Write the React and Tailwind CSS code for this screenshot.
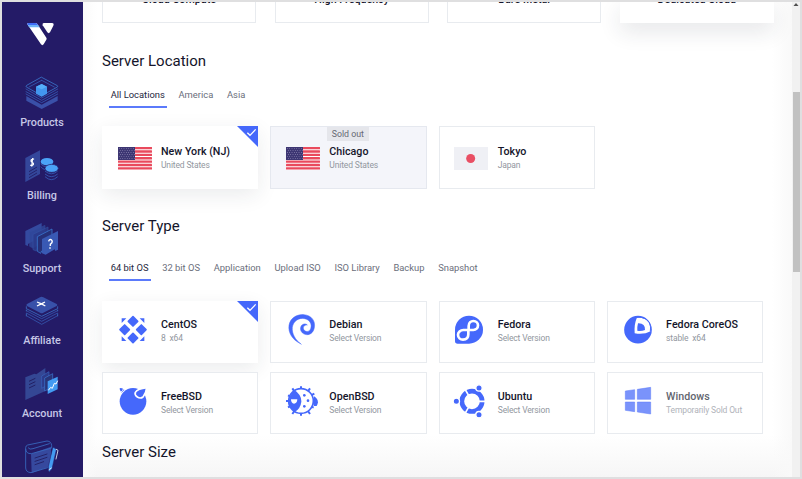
import React from "react";

const BLUE = "#4568fb";

/* ---------- sidebar drawings ---------- */

function LogoMark() {
  return (
    <svg width="28" height="24" viewBox="0 0 84 72" className="block">
      <path d="M3 3h22q4 0 6 3l27 41q2 3 0 6l-8 14q-4 5-8 0L1 7q-1-3 2-4z" fill="#fff" />
      <path d="M3 3h22q4 0 6 3l2 3H2L1 7q-1-3 2-4z" fill="#3f6cf5" />
      <path d="M2 9h31l5 7H7z" fill="#6fb4f8" />
      <path d="M50 3h25q7 1 4 8L69 31q-4 5-8 0L47 10q-2-6 3-7z" fill="#fff" />
    </svg>
  );
}

function ProductsArt() {
  return (
    <g strokeLinejoin="round" strokeLinecap="round">
      <path d="M4 60L50 86L98 60V74L50 99L4 74z" fill="#3a50a8" />
      <path d="M3 52L50 79L98 52L50 68z" fill="#241b67" />
      <path d="M50 4L97 29Q99 31 97 33L50 59L4 33Q2 31 4 29z" fill="none" stroke="#3a74ca" strokeWidth="2.5" />
      <path d="M50 13L88 33M50 13L12 33M3 39L50 66L98 39M3 47L50 73L98 47M3 54L50 80L98 54" fill="none" stroke="#375fba" strokeWidth="2.3" />
      <path d="M50 24L66 32V53L50 62L33 53V32z" fill="#4296ef" />
      <path d="M50 24L66 32L50 40L33 32z" fill="#55aefb" />
    </g>
  );
}

function BillingArt() {
  return (
    <g>
      <path d="M1 27L45 4V75L1 99z" fill="#34479b" />
      <path d="M27 31Q24 28 20 31Q16 35 20 39Q27 42 25 47Q20 52 16 48M23 27L20 53" fill="none" stroke="#fff" strokeWidth="3.4" />
      <path d="M12 68L36 54M12 77L36 63M12 86L36 72" stroke="#211a62" strokeWidth="2.5" />
      <g fill="none" stroke="#375cb7" strokeWidth="2.5">
        <path d="M47 45Q65 61 82 45M47 53Q60 67 72 60M60 66Q79 83 98 66M60 75Q79 91 98 75M60 83Q79 101 98 83" />
      </g>
      <ellipse cx="66" cy="38" rx="19" ry="11" fill="#4ba3f7" />
      <ellipse cx="80" cy="58" rx="20" ry="12" fill="#4ba3f7" stroke="#241b67" strokeWidth="2" />
    </g>
  );
}

function SupportArt() {
  return (
    <g strokeLinejoin="round">
      <path d="M1 27L50 3V43L9 66V72L1 69z" fill="#344aa0" />
      <path d="M14 31L60 10V54L24 78L14 73z" fill="#30479a" stroke="#344f9f" strokeWidth="2" opacity=".8" />
      <path d="M24 37L69 15V60L34 82V87L24 83z" fill="#2b3b8c" stroke="#3656a7" strokeWidth="2" opacity=".85" />
      <path d="M37 44L81 21V67L50 87L47 94L37 88z" fill="#263078" stroke="#3976ce" strokeWidth="2.4" />
      <path d="M51 51L99 27V83L91 87L89 82L62 98L51 94z" fill="#3959b4" />
      <path d="M71 58Q73 51 78 53Q84 57 80 63L76 67V72M75 76V80" fill="none" stroke="#fff" strokeWidth="4.2" />
    </g>
  );
}

function AffiliateArt() {
  return (
    <g strokeLinejoin="round">
      <path d="M4 65L50 91L98 65M4 57L50 82L98 57M4 50L50 74L98 50" fill="none" stroke="#375fb9" strokeWidth="2.2" />
      <path d="M4 37V44L50 67L98 44V37M4 47V52M98 47V52M4 58V67M98 58V67" fill="none" stroke="#3d76cb" strokeWidth="2.3" />
      <path d="M45 10Q50 7 55 10L95 30Q99 33 95 36L55 56Q50 59 45 56L6 36Q2 33 6 30z" fill="#3851a9" />
      <path d="M36 24L46 28Q49 30 52 28L60 24M36 36L46 31Q49 29 52 31L61 36" fill="none" stroke="#fff" strokeWidth="4" />
    </g>
  );
}

function AccountArt() {
  return (
    <g strokeLinejoin="round">
      <path d="M1 31L28 20L34 22L61 3V72L1 99z" fill="#344794" />
      <path d="M12 43L31 34M12 53L31 44M12 63L31 54" stroke="#222064" strokeWidth="3" />
      <path d="M50 27L72 14V51L50 64z" fill="#2d3b8a" stroke="#3865be" strokeWidth="2" />
      <path d="M59 33L83 20V60L59 72z" fill="#293579" stroke="#3d78d3" strokeWidth="2" />
      <path d="M68 43L98 29V67L68 81z" fill="#439bf2" />
      <path d="M70 70L77 61L82 64L88 49L93 51L98 41" fill="none" stroke="#fff" strokeWidth="3" />
    </g>
  );
}

function NotesArt() {
  return (
    <g strokeLinejoin="round" strokeLinecap="round">
      <path d="M18 42L78 20V78L20 99z" fill="#36499e" />
      <path d="M2 22Q2 17 8 15L66 3Q79 4 80 17V24L19 41Q3 42 2 27zM2 27V84Q3 97 18 98L68 83M10 24Q14 30 24 26L73 11" fill="none" stroke="#3869bf" strokeWidth="2.6" />
      <path d="M30 54L66 42M30 64L66 52M30 74L56 65" stroke="#242064" strokeWidth="2.8" />
      <path d="M83 25Q86 20 90 25L94 29L81 86L72 97L70 82z" fill="#439bf2" stroke="#241b67" strokeWidth="1.5" />
      <path d="M94 28L99 31L93 57M72 89L79 84" fill="none" stroke="#e8f3ff" strokeWidth="2.5" />
    </g>
  );
}

const NAV = [
  ["Products", ProductsArt],
  ["Billing", BillingArt],
  ["Support", SupportArt],
  ["Affiliate", AffiliateArt],
  ["Account", AccountArt],
  ["", NotesArt],
];

function Sidebar() {
  return (
    <nav className="flex w-[81px] shrink-0 flex-col items-center overflow-hidden bg-[#241b67] pr-[1px]">
      <div className="flex h-[74px] w-full shrink-0 pt-5 pl-[24.5px]">
        <LogoMark />
      </div>
      {NAV.map(([label, Art], i) => (
        <a key={i} className="flex h-[72.8px] shrink-0 flex-col items-center">
          <svg width="34" height="34" viewBox="0 0 102 102" className="block shrink-0">
            <Art />
          </svg>
          <span className="mt-[6px] text-[10.8px] leading-[14px] font-medium text-[#c6c7e6]">{label}</span>
        </a>
      ))}
    </nav>
  );
}

/* ---------- flags and OS logos ---------- */

function UsFlag() {
  return (
    <svg width="34" height="23" viewBox="0 0 102 69" className="mt-px block">
      <rect width="102" height="69" fill="#fff" />
      {[0, 10, 20, 30.3, 40.5, 50.5, 60.8].map((y) => (
        <rect key={y} y={y} width="102" height="7" rx="1" fill="#e94a5d" />
      ))}
      <rect width="51" height="39" fill="#3d3673" />
      {[0, 1, 2, 3, 4, 5].map((r) =>
        [0, 1, 2, 3, 4, 5, 6].map((c) => (
          <circle key={r + "-" + c} cx={4 + c * 7 + (r % 2) * 3} cy={4 + r * 6.2} r="1.3" fill="#b3aed0" />
        ))
      )}
    </svg>
  );
}

function JpFlag() {
  return (
    <svg width="34" height="23" viewBox="0 0 102 69" className="mt-px block">
      <rect width="102" height="69" fill="#eff0f5" />
      <circle cx="50" cy="34.5" r="13.5" fill="#e94f64" />
    </svg>
  );
}

function CentOS() {
  return (
    <g fill={BLUE}>
      <path d="M51 11L65 25L51 39L37 25zM51 61L65 75L51 89L37 75zM12 50L26 36L40 50L26 64zM62 50L76 36L90 50L76 64z" strokeLinejoin="round" stroke={BLUE} strokeWidth="5" />
      <path d="M17 16H31L17 30zM85 16H71L85 30zM17 84H31L17 70zM85 84H71L85 70z" />
    </g>
  );
}

function Debian() {
  return (
    <path
      d="M50 92C25 81 12 59 15 37C19 14 40 3 60 5C82 7 95 23 91 44C88 60 76 68 63 64C50 60 46 46 53 37C58 32 66 31 70 36C61 35 56 42 59 49C63 58 76 58 80 47C85 33 77 20 62 17C44 13 28 24 25 43C23 62 34 81 52 94z"
      fill={BLUE}
      stroke={BLUE}
      strokeWidth="1.5"
    />
  );
}

function Fedora() {
  return (
    <g>
      <path d="M51 8A42 42 0 1 1 51 92H17Q9 92 9 84V50A42 42 0 0 1 51 8z" fill={BLUE} />
      <path
        d="M50 51V39C50 29 57 24 64 24C73 24 78 31 78 37C78 45 72 51 64 51H34C25 51 18 58 18 65C18 74 25 80 33 80C43 80 49 74 49 64V51"
        fill="none"
        stroke="#fff"
        strokeWidth="8"
      />
    </g>
  );
}

function CoreOS() {
  return (
    <g>
      <circle cx="51" cy="50" r="41.5" fill={BLUE} />
      <path d="M47 16Q39 34 41 61Q68 66 89 55Q92 22 61 14Q52 11 47 16z" fill="#fff" />
      <path d="M51 31Q48 42 49 53Q61 55 72 51Q73 30 51 31z" fill={BLUE} />
      <path d="M48 13Q75 11 85 29Q91 41 88 56" fill="none" stroke={BLUE} strokeWidth="3" />
    </g>
  );
}

function FreeBSD() {
  return (
    <g>
      <circle cx="51" cy="52" r="40" fill={BLUE} />
      <path d="M11 13Q17 10 25 17L17 26Q10 20 11 13z" fill={BLUE} />
      <path d="M58 25Q65 14 92 11Q91 26 81 39Q73 45 64 39Q55 33 58 25z" fill={BLUE} stroke="#fff" strokeWidth="5" />
      <path d="M25 10Q21 20 11 29" stroke="#fff" strokeWidth="3" fill="none" />
    </g>
  );
}

function OpenBSD() {
  return (
    <g>
      <g stroke={BLUE} strokeWidth="6">
        <path d="M51 7V95M25 13L78 90M78 13L25 90M6 51H20M12 34L89 71M12 70L91 29" />
      </g>
      <path d="M85 50L91 37Q108 50 98 66L90 66z" fill={BLUE} />
      <circle cx="51" cy="51" r="37" fill="#fff" stroke={BLUE} strokeWidth="5" />
      <path d="M31 18Q53 32 52 54Q49 75 32 84Q-2 54 31 18z" fill={BLUE} />
      <path d="M21 46H40Q39 59 30 59Q21 58 21 46z" fill="#fff" />
      <g fill={BLUE}>
        <circle cx="61" cy="34" r="4" />
        <circle cx="72" cy="50" r="4" />
        <circle cx="61" cy="67" r="4" />
      </g>
    </g>
  );
}

function Ubuntu() {
  return (
    <g>
      <circle cx="60" cy="52" r="30.5" fill="none" stroke={BLUE} strokeWidth="14" />
      <g stroke="#fff" strokeWidth="5">
        <path d="M60 52H101M60 52L37 12M60 52L37 92" />
      </g>
      <g fill={BLUE} stroke="#fff" strokeWidth="4">
        <circle cx="13" cy="52" r="9.5" />
        <circle cx="81" cy="12" r="9.5" />
        <circle cx="81" cy="92" r="9.5" />
      </g>
    </g>
  );
}

function Windows() {
  return (
    <path
      d="M13 21L41 17V46H13zM49 16L89 10V46H49zM13 54H41V83L13 79zM49 54H89V90L49 84z"
      fill="#7a93fb"
      stroke="#5c7bf8"
      strokeWidth="1.5"
    />
  );
}

/* ---------- page pieces ---------- */

function CheckCorner() {
  return (
    <svg width="21" height="21" viewBox="0 0 63 63" className="absolute -top-px -right-px">
      <path d="M0 0H63V63z" fill={BLUE} />
      <path d="M31 20L39 28L56 10" fill="none" stroke="#fff" strokeWidth="4" />
    </svg>
  );
}

function Card({ art, name, sub, selected, soldOut, dim, textShift = "pt-[1.5px]" }) {
  const skin = selected
    ? "bg-white border-white shadow-[0_6px_20px_rgba(30,45,60,0.09)]"
    : soldOut
      ? "bg-[#f4f5fa] border-[#e5e8ef]"
      : "bg-white border-[#e8ebef]";
  return (
    <div className={`relative flex min-h-[62px] w-[156.2px] shrink-0 items-center border pl-[14.6px] ${skin}`}>
      <div className="flex w-[34px] shrink-0 justify-center">{art}</div>
      <div className={`ml-[9.4px] flex flex-col whitespace-nowrap ${textShift}`}>
        <span className={`text-[10.7px] leading-[13px] font-medium ${dim ? "text-[#62656f]" : "text-[#14152b]"}`}>{name}</span>
        <span className={`mt-px text-[8.5px] leading-3 tracking-[-0.15px] whitespace-pre ${dim ? "text-[#b0b3ba]" : "text-[#9297a0]"}`}>{sub}</span>
      </div>
      {selected && <CheckCorner />}
      {soldOut && (
        <span className="absolute top-0 left-[55.5px] h-[14px] w-[42px] bg-[#e5e6eb] text-center text-[8.8px] leading-[14px] text-[#656973]">Sold out</span>
      )}
    </div>
  );
}

function Os({ Art, ...rest }) {
  return (
    <Card
      {...rest}
      textShift="pb-[1.6px]"
      art={
        <svg width="34" height="34" viewBox="0 0 102 102" className="mr-[4px] -mt-[5px] block shrink-0">
          <Art />
        </svg>
      }
    />
  );
}

function Tabs({ items }) {
  return (
    <div className="flex h-[23px] gap-[13.7px] pl-[8.7px]">
      {items.map((t, i) => (
        <div key={t} className="relative flex justify-center text-[9.4px] leading-[20px] whitespace-nowrap">
          <span className={i ? "text-[#6a6e7b]" : "text-[#24263c]"}>{t}</span>
          {i === 0 && <span className="absolute -right-[2px] bottom-0 -left-[2px] h-[2px] bg-[#5b7afb]" />}
        </div>
      ))}
    </div>
  );
}

function Heading({ children }) {
  return <h2 className="h-5 text-[15px] leading-5 font-normal text-[#14152b]">{children}</h2>;
}

export default function App() {
  return (
    <div className="flex h-[479px] w-[802px] overflow-hidden border-2 border-[#dfdfe0] font-['Roboto','Liberation_Sans',sans-serif]">
      <Sidebar />
      <main className="flex min-w-0 flex-1 flex-col overflow-hidden bg-[linear-gradient(to_right,#fafafa,transparent_14px),linear-gradient(to_left,#f9f9f9,transparent_20px),linear-gradient(to_top,#f6f6f6,transparent_42px)] pl-[19px]">
        <div className="flex h-[21px] shrink-0 gap-[18.6px]">
          {["Cloud Compute", "High Frequency", "Bare Metal", "Dedicated Cloud"].map((t, i) => (
            <div
              key={t}
              className={`flex w-[154px] shrink-0 justify-center border-x border-b bg-white text-[10.7px] font-medium text-[#14152b] ${i === 3 ? "border-white shadow-[0_8px_22px_rgba(30,45,60,0.12)]" : "border-[#e8ebef]"}`}
            >
              <span className="-mt-[9px] leading-[14px]">{t}</span>
            </div>
          ))}
        </div>

        <section className="mt-[28px] shrink-0">
          <Heading>Server Location</Heading>
          <div className="mt-[14px]">
            <Tabs items={["All Locations", "America", "Asia"]} />
          </div>
          <div className="mt-[18px] flex h-[63px] gap-[12.2px]">
            <Card art={<UsFlag />} name="New York (NJ)" sub="United States" selected />
            <Card art={<UsFlag />} name="Chicago" sub="United States" soldOut />
            <Card art={<JpFlag />} name="Tokyo" sub="Japan" />
          </div>
        </section>

        <section className="mt-[27px] shrink-0">
          <Heading>Server Type</Heading>
          <div className="mt-[22px]">
            <Tabs items={["64 bit OS", "32 bit OS", "Application", "Upload ISO", "ISO Library", "Backup", "Snapshot"]} />
          </div>
          <div className="mt-5 flex flex-wrap gap-x-[12.2px] gap-y-[9.4px]">
            <Os Art={CentOS} name="CentOS" sub="8  x64" selected />
            <Os Art={Debian} name="Debian" sub="Select Version" />
            <Os Art={Fedora} name="Fedora" sub="Select Version" />
            <Os Art={CoreOS} name="Fedora CoreOS" sub="stable  x64" />
            <Os Art={FreeBSD} name="FreeBSD" sub="Select Version" />
            <Os Art={OpenBSD} name="OpenBSD" sub="Select Version" />
            <Os Art={Ubuntu} name="Ubuntu" sub="Select Version" />
            <Os Art={Windows} name="Windows" sub="Temporarily Sold Out" dim />
          </div>
        </section>

        <section className="mt-[7.6px] shrink-0">
          <Heading>Server Size</Heading>
        </section>
      </main>
      <div className="flex w-[8px] shrink-0 flex-col items-center bg-[#f1f1f1]">
        <svg width="6" height="5" viewBox="0 0 6 5" className="mt-px block shrink-0">
          <path d="M3 0L5.5 3H.5z" fill="#505050" />
        </svg>
        <div className="mt-[84px] h-[180px] w-[7px] bg-[#c1c1c1]" />
      </div>
    </div>
  );
}
